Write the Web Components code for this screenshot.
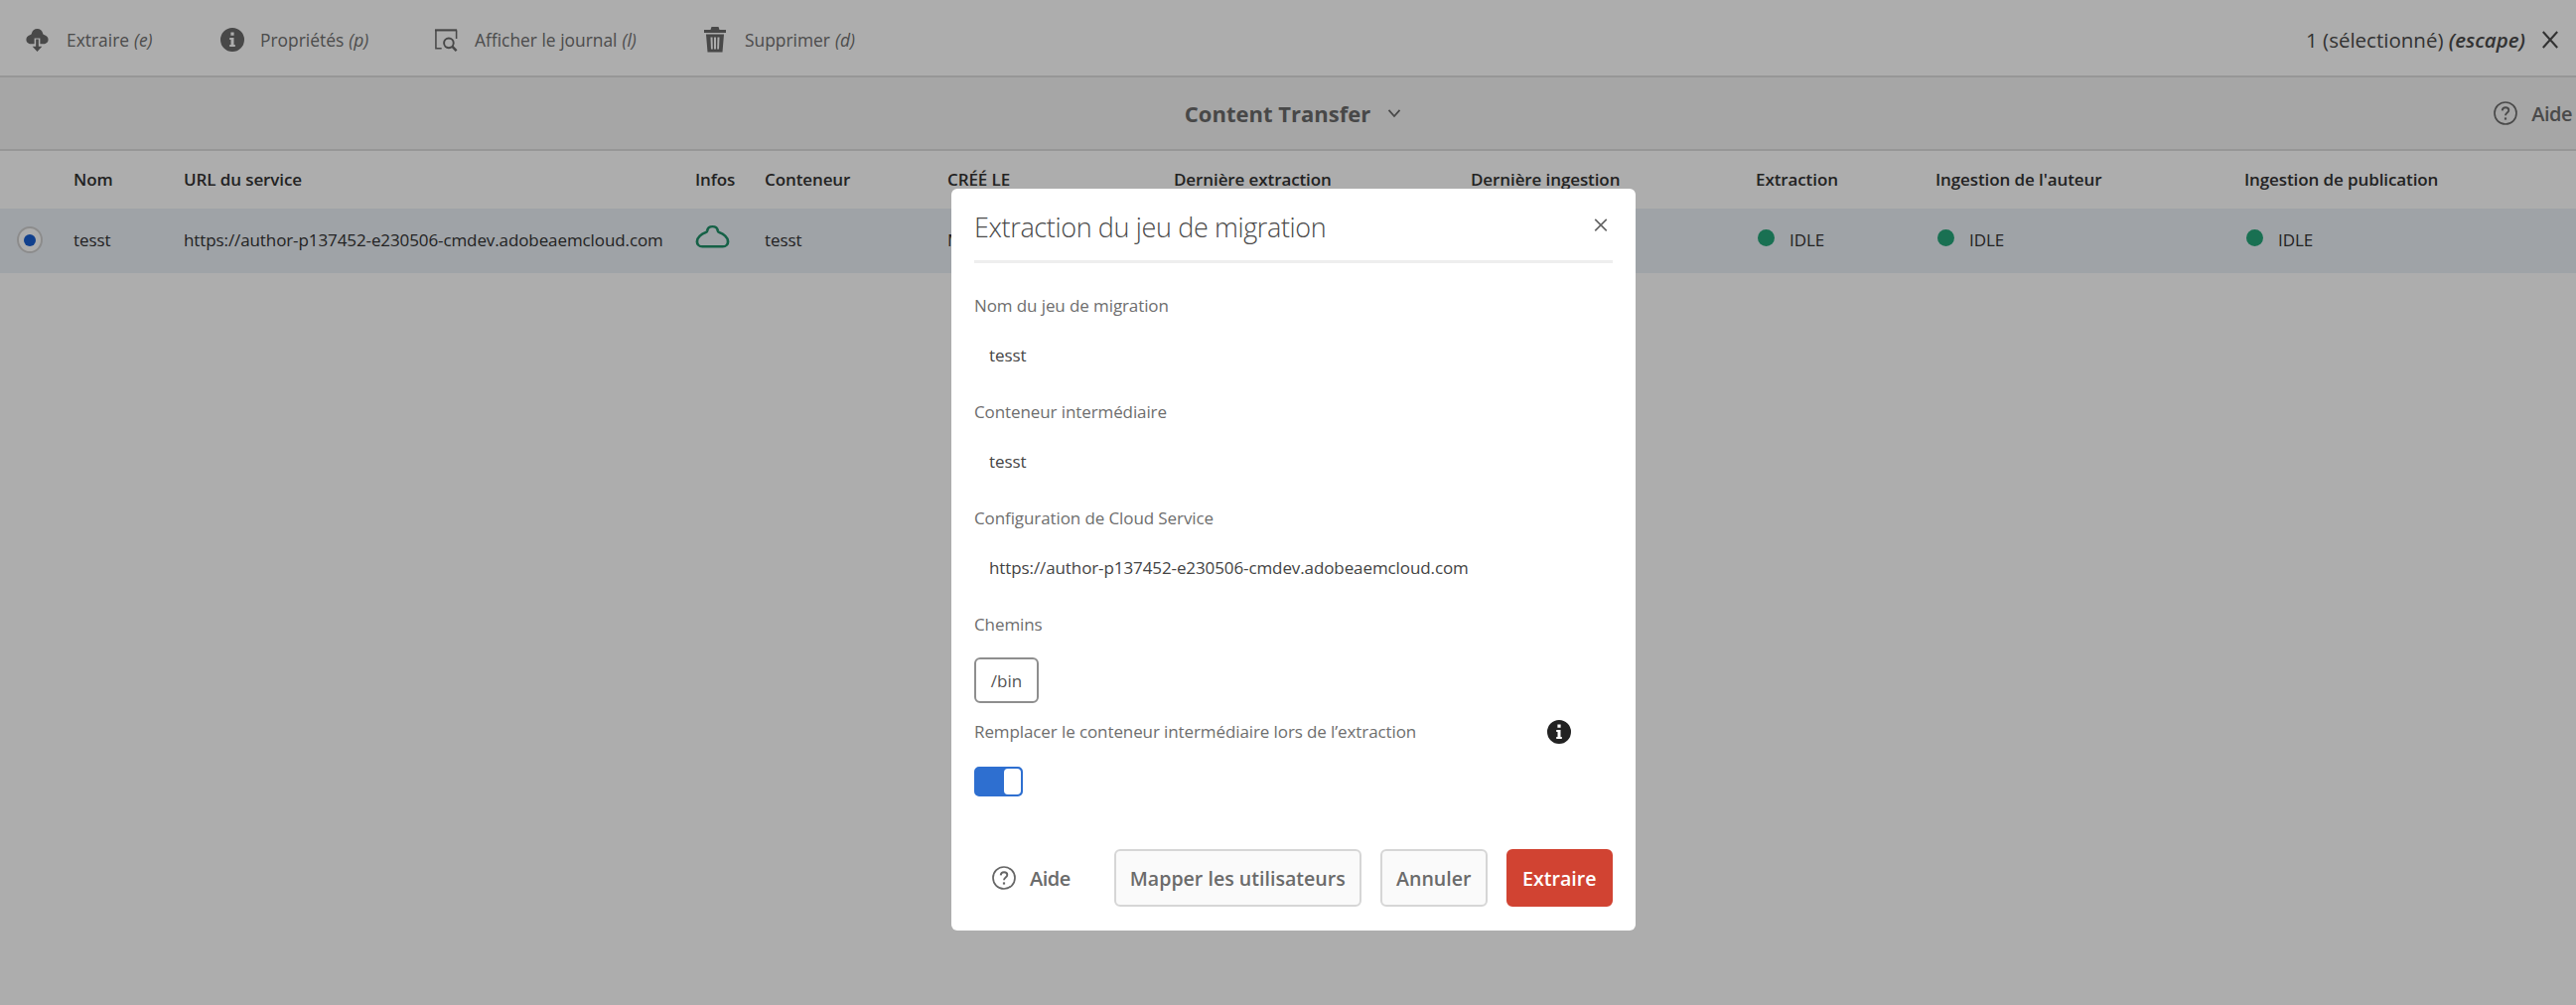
<!DOCTYPE html>
<html lang="fr"><head><meta charset="utf-8"><title>Content Transfer</title>
<style>
html,body{margin:0;padding:0;height:100%;background:#fff;overflow:hidden}
body{font-family:"Open Sans","Noto Sans",sans-serif;color:#2c2c2c;font-size:17px}
</style></head>
<body>
<cq-app>
  <cq-toolbar>
    <cq-tool icon="extract" key="(e)" w="198">Extraire</cq-tool>
    <cq-tool icon="info" key="(p)" w="215">Propriétés</cq-tool>
    <cq-tool icon="log" key="(l)" w="271">Afficher le journal</cq-tool>
    <cq-tool icon="trash" key="(d)" w="200">Supprimer</cq-tool>
  </cq-toolbar>
  <cq-titlebar>Content Transfer</cq-titlebar>
  <cq-table></cq-table>
  <cq-backdrop></cq-backdrop>
  <cq-dialog heading="Extraction du jeu de migration"></cq-dialog>
</cq-app>
<script>
const ICONS={
 extract:'<svg width="27" height="28" viewBox="0 0 28 28"><path fill="currentColor" fill-rule="evenodd" d="M14 2.500c3 0 5.300 2 5.800 4.800 .2 .9 .5 1.200 1.300 1.500 2.400 .7 4.400 2.400 4.400 5 0 2.900-2.300 4.700-5 4.700H17v-6h-6v6H7.500c-2.700 0-5-1.800-5-4.700 0-2.600 2-4.300 4.400-5 .8-.3 1.100-.6 1.300-1.500C8.700 4.500 11 2.500 14 2.500zM12.600 13.500h2.800v7.500H19l-5 5.500-5-5.500h3.600z"/></svg>',
 info:'<svg width="24" height="24" viewBox="0 0 24 24"><path fill="currentColor" fill-rule="evenodd" d="M12 0a12 12 0 1 1 0 24a12 12 0 0 1 0-24zM10.400 4.500v3.300h3.200V4.500zM9.200 10v2h1.300v5H9.200v2h5.600v-2h-1.300v-7z"/></svg>',
 log:'<svg width="25" height="26" viewBox="0 0 26 26" fill="none" stroke="currentColor"><path stroke-width="2.200" d="M1 3h23"/><path stroke-width="1.600" d="M2 3v19h6M23.500 3v9"/><circle cx="15.500" cy="16.500" r="5" stroke-width="2"/><path stroke-width="2.600" d="M19 20l4.500 4.500"/></svg>',
 trash:'<svg width="26" height="26" viewBox="0 0 26 26"><path fill="currentColor" fill-rule="evenodd" d="M8.500 0h7l1 3H23v3H1V3h6.500zM3 7.500h18L19.500 25.500H4.500zM7.500 10.500l.5 12h1.800l-.3-12zM11 10.500v12h2v-12zM14.500 10.500l-.3 12H16l.5-12z"/></svg>',
 help:'<svg width="24" height="24" viewBox="0 0 24 24" fill="none" stroke="currentColor" stroke-width="1.700"><circle cx="12" cy="12" r="11"/><path stroke-width="1.900" d="M8.700 9.300c.2-2 1.700-3 3.400-3 1.800 0 3.200 1.100 3.200 2.800 0 2.500-3.300 2.500-3.300 5.200"/><path stroke-width="2.200" d="M12 16.400v2.200"/></svg>',
 close:'<svg width="18" height="20" viewBox="0 0 20 20" preserveAspectRatio="none" fill="none" stroke="currentColor" stroke-width="2.400"><path d="M2 2l16 16M18 2L2 18"/></svg>',
 chev:'<svg width="14" height="10" viewBox="0 0 14 10" fill="none" stroke="currentColor" stroke-width="1.800"><path d="M1.500 1.800L7 8l5.500-6.200"/></svg>',
 cloud:'<svg width="35" height="24" viewBox="0 0 36 28" preserveAspectRatio="none" fill="none" stroke="#1f8f68" stroke-width="2.800" stroke-linejoin="round"><path d="M18 2.500c-3 0-5 1.800-5.500 5-.2 1-.8 1.500-1.700 1.900C7 11 2 15 2 20c0 3.400 2 6 5.500 6h21c3.500 0 5.500-2.600 5.500-6 0-5-5-9-8.800-10.600-.9-.4-1.500-.9-1.700-1.900-.5-3.200-2.500-5-5.500-5z"/></svg>'
};
function def(name,css,html){
 customElements.define(name,class extends HTMLElement{
  constructor(){super();this.attachShadow({mode:'open'})}
  connectedCallback(){
   this.shadowRoot.innerHTML='<style>'+css+'</style>'+(typeof html==='function'?html(this):html);
  }
 });
}
def('cq-icon',':host{display:inline-flex;line-height:0}',h=>ICONS[h.getAttribute('name')]);
def('cq-app',':host{display:block;position:relative;width:2594px;height:1012px;overflow:hidden;background:#fff}','<slot></slot>');
def('cq-backdrop',':host{display:block;position:absolute;inset:0;background:rgba(0,0,0,.32)}','');
def('cq-toolbar',`:host{display:flex;align-items:center;box-sizing:border-box;height:78px;padding:3px 17px 0 24px;border-bottom:2px solid #ddd;background:#fff}
 .sel{margin-left:auto;display:flex;align-items:center;gap:16px;font-size:20.500px;letter-spacing:0;color:#4b4b4b}
 i{font-weight:600}`,
 `<slot></slot><div class="sel"><span>1 (sélectionné) <i>(escape)</i></span><cq-icon name="close"></cq-icon></div>`);
def('cq-tool',`:host{display:flex;align-items:center;gap:16px;font-size:17.400px;color:#707070;letter-spacing:0}
 i{margin-left:5px}.ic{display:flex;color:#6a6a6a}`,
 h=>{h.style.width=h.getAttribute('w')+'px';return `<span class="ic"><cq-icon name="${h.getAttribute('icon')}"></cq-icon></span><span><slot></slot><i>${h.getAttribute('key')}</i></span>`});
def('cq-titlebar',`:host{display:grid;grid-template-columns:1fr auto 1fr;align-items:center;box-sizing:border-box;height:74px;background:#f5f5f5;border-bottom:2px solid #ddd}
 .t{display:flex;align-items:center;gap:17px;font-size:22px;font-weight:700;color:#6a6a6a;padding-left:10px}
 .a{justify-self:end;display:flex;align-items:center;gap:14px;font-size:20px;font-weight:600;color:#6e6e6e;margin-right:4px;letter-spacing:-.5px}`,
 `<span></span><div class="t"><slot></slot><cq-icon name="chev"></cq-icon></div><div class="a"><cq-icon name="help"></cq-icon><span>Aide</span></div>`);
const COLS='74px 111px 515px 70px 184px 228px 299px 287px 181px 311px 1fr';
def('cq-table',`:host{display:block;font-size:17px;letter-spacing:-.1px}
 .r{display:grid;grid-template-columns:${COLS};align-items:center}
 .h{height:58px;font-weight:600;color:#333;box-sizing:border-box;padding-bottom:2px}
 .b{height:65px;background:#eaf0f7;color:#333;box-sizing:border-box;padding-bottom:2px}
 .radio{justify-self:center;margin-left:-14px;width:26px;height:27px;box-sizing:border-box;border-radius:50%;background:#fff;border:2px solid #cfcfcf;display:flex;align-items:center;justify-content:center}
 .radio b{width:12px;height:12px;border-radius:50%;background:#1a5fd0}
 .u{white-space:nowrap}.c{margin-top:-2px}`,
 `<div class="r h"><span></span><span>Nom</span><span>URL du service</span><span>Infos</span><span>Conteneur</span><span>CRÉÉ LE</span><span>Dernière extraction</span><span>Dernière ingestion</span><span>Extraction</span><span>Ingestion de l'auteur</span><span>Ingestion de publication</span></div>
 <div class="r b"><div class="radio"><b></b></div><span>tesst</span><span class="u">https://author-p137452-e230506-cmdev.adobeaemcloud.com</span><span class="c"><cq-icon name="cloud"></cq-icon></span><span>tesst</span><span>Mar</span><span></span><span></span><cq-status>IDLE</cq-status><cq-status>IDLE</cq-status><cq-status>IDLE</cq-status></div>`);
def('cq-status',`:host{display:flex;align-items:center;gap:15px}b{width:17px;height:17px;border-radius:50%;background:#26a67a;margin:-5px 0 0 2px}`,'<b></b><slot></slot>');
def('cq-field',`:host{display:block;color:#444}
 label{display:block;font-size:17px;color:#6e6e6e;letter-spacing:-.1px;line-height:20px}
 div{font-size:17px;padding-left:15px;letter-spacing:-.1px;line-height:20px;margin-top:30px}`,
 h=>`<label>${h.getAttribute('label')}</label><div><slot></slot></div>`);
def('cq-button',`:host{display:flex;align-items:center;justify-content:center;box-sizing:border-box;height:58px;border-radius:6px;font-size:19.600px;font-weight:600;border:2px solid #d6d6d6;background:#fafafa;color:#6b6b6b}
 :host([primary]){background:#d14332;border-color:#d14332;color:#fff}`,'<slot></slot>');
def('cq-dialog',`:host{display:block;position:absolute;left:958px;top:190px;width:689px;height:747px;box-sizing:border-box;background:#fff;border-radius:6px;padding:0 23px;color:#333}
 header{display:flex;align-items:center;justify-content:space-between;height:75px;border-bottom:3px solid #eee;padding-top:4px;box-sizing:border-box}
 h2{margin:0;font-size:27px;font-weight:300;color:#4a4a4a;letter-spacing:-.37px}
 .x{margin-right:3px;color:#666;transform:scale(.8,.72)}
 .fields{display:flex;flex-direction:column;padding-top:33px;gap:37px}
 .lab{font-size:17px;color:#6e6e6e;letter-spacing:-.1px;line-height:20px}
 .tag{margin-top:23px;width:65px;height:46px;box-sizing:border-box;border:2px solid #8e8e8e;border-radius:6px;display:flex;align-items:center;justify-content:center;font-size:17px;color:#555}
 .over{display:flex;justify-content:space-between;align-items:center;margin-top:17px;padding-right:42px}
 .over cq-icon{color:#222}
 .sw{margin-top:23px;width:49px;height:30px;box-sizing:border-box;border-radius:5px;background:#2e6fd0;border:2px solid #2e6fd0;display:flex;justify-content:flex-end}
 .sw b{width:17px;background:#fff;border-radius:4px}
 footer{display:flex;align-items:center;margin-top:53px;gap:19px}
 .help{display:flex;align-items:center;gap:14px;margin:0 25px 0 18px;font-size:20px;font-weight:600;color:#6b6b6b;letter-spacing:-.5px}
 .help cq-icon{color:#666}`,
 h=>`<header><h2>${h.getAttribute('heading')}</h2><span class="x"><cq-icon name="close"></cq-icon></span></header>
 <div class="fields">
  <cq-field label="Nom du jeu de migration">tesst</cq-field>
  <cq-field label="Conteneur intermédiaire">tesst</cq-field>
  <cq-field label="Configuration de Cloud Service">https://author-p137452-e230506-cmdev.adobeaemcloud.com</cq-field>
 </div>
 <div class="lab" style="margin-top:37px">Chemins</div>
 <div class="tag">/bin</div>
 <div class="over"><span class="lab">Remplacer le conteneur intermédiaire lors de l’extraction</span><cq-icon name="info"></cq-icon></div>
 <div class="sw"><b></b></div>
 <footer><div class="help"><cq-icon name="help"></cq-icon><span>Aide</span></div>
  <cq-button style="width:249px">Mapper les utilisateurs</cq-button>
  <cq-button style="width:108px">Annuler</cq-button>
  <cq-button primary style="width:107px">Extraire</cq-button></footer>`);
</script>
</body></html>
